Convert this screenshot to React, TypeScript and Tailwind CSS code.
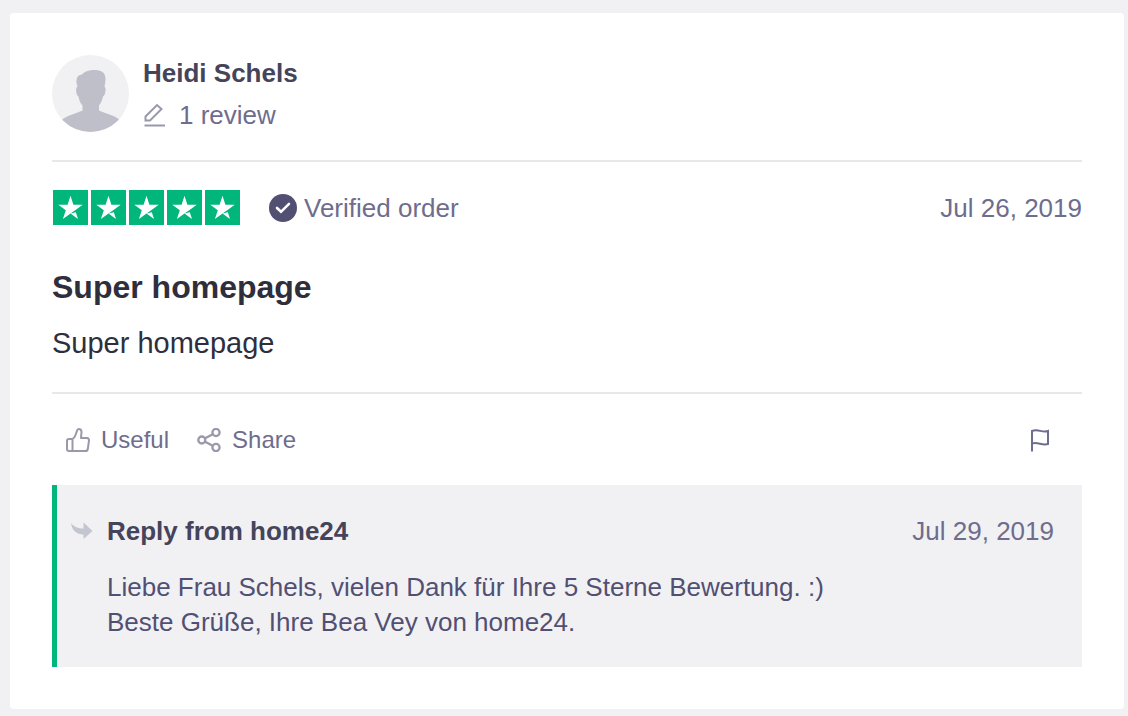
import React from "react";

function Avatar() {
  return (
    <svg viewBox="0 0 77 77" className="size-[77px] shrink-0" aria-hidden="true">
      <clipPath id="avatar-clip">
        <circle cx="38.5" cy="38.5" r="38.5" />
      </clipPath>
      <circle cx="38.5" cy="38.5" r="38.5" fill="#f1f1f4" />
      <path
        clipPath="url(#avatar-clip)"
        fill="#bfbfca"
        d="M25.500 31.500C23.500 26 24 20 30 19.500C33 16 38 15 42 15C49 15 53.500 17 53.500 24C53.500 27 53 29 52.500 31.500C54.500 32.500 53.500 40.500 51 41.500C50.500 44.500 49 48 47 50.500V55.500C53 58.500 62 60 68 65L77 77H0L9.500 65C16 60 24.500 58.500 30.500 55.500V50.500C28 48 27 44.500 26.500 41.500C24 40.500 23.200 32.500 25.500 31.500Z"
      />
    </svg>
  );
}

function Star() {
  return (
    <svg viewBox="0 0 35 35" className="size-[35px]" aria-hidden="true">
      <rect width="35" height="35" fill="#00b67a" />
      <path fill="#fff" d="M29.700 14.700H20.400L17.500 5.800L14.600 14.700H5.300L12.800 20.200L9.900 29.100L17.500 23.600L22.200 20.200Z" />
      <path fill="#fff" d="M17.500 23.600L22.800 22.300L25 29.100Z" />
    </svg>
  );
}

function PencilIcon() {
  return (
    <svg viewBox="0 0 22 24" className="h-6 w-[22px]" fill="none" stroke="#9a99ac" strokeWidth="2" aria-hidden="true">
      <path d="M2.500 13.500L14 2L18.500 6L7 17.500H2.500Z" />
      <path d="M1.500 22.500H22" />
    </svg>
  );
}

function VerifiedIcon() {
  return (
    <svg viewBox="0 0 28 28" className="size-7" fill="none" aria-hidden="true">
      <circle cx="14" cy="14" r="14" fill="#515073" />
      <path d="M8 14L12 17.800L20 9.800" stroke="#fff" strokeWidth="2.600" strokeLinecap="round" />
    </svg>
  );
}

function ThumbIcon() {
  return (
    <svg viewBox="0 0 24 24" className="size-6" fill="none" stroke="#9a99ac" strokeWidth="2" strokeLinejoin="round" aria-hidden="true">
      <path d="M7 11H3Q1 11 1 13V21Q1 23 3 23H19.500Q21.500 23 21.800 21L23 12.500Q23 10 21 10H15L15.500 4Q15.500 1 12.800 1Q11.300 1 11 2.800L9.500 7Q8.800 9.500 6.500 11V23" />
    </svg>
  );
}

function ShareIcon() {
  return (
    <svg viewBox="0 0 24 24" className="size-6" fill="none" stroke="#9a99ac" strokeWidth="2.300" aria-hidden="true">
      <circle cx="4.800" cy="12" r="3.500" />
      <circle cx="19" cy="4.500" r="3.600" />
      <circle cx="19" cy="19.500" r="3.600" />
      <path d="M8 10.300L15.900 6.200M8 13.700L15.900 17.800" />
    </svg>
  );
}

function FlagIcon() {
  return (
    <svg viewBox="0 0 20 24" className="h-6 w-5" fill="none" stroke="#6e6d8d" strokeWidth="2" aria-hidden="true">
      <path d="M2 23.500V3C8 0.500 12 5 18 3V16C12 18 8 13.500 2 15.500" />
    </svg>
  );
}

function ReplyIcon() {
  return (
    <svg viewBox="0 0 22 18" className="h-[18px] w-[22px]" fill="#c3c5d0" aria-hidden="true">
      <path d="M0 1C3 5 7 6.500 12.500 6.500V0.500L21.500 9L12.500 17V12.500C5.500 12.500 1 8.500 0 1Z" />
    </svg>
  );
}

function App() {
  return (
    <main className="min-h-screen bg-[#f1f1f4] pt-[13px] pr-1 pb-[7px] pl-[10px] font-['Liberation_Sans',Arial,sans-serif] text-[26px] leading-9 text-[#6e6d8d]">
      <article className="rounded bg-white p-[42px]">
        <header className="flex items-start gap-[14px] border-b-2 border-[#e8e8ea] pb-7">
          <Avatar />
          <div className="flex flex-col gap-2">
            <a href="#profile" className="font-bold text-[#45445a]">Heidi Schels</a>
            <div className="flex items-center gap-[14px] leading-8">
              <PencilIcon />
              <span>1 review</span>
            </div>
          </div>
        </header>

        <section className="border-b-2 border-[#e8e8ea] pt-7 pb-[31px]">
          <div className="flex items-start justify-between">
            <div className="flex items-start">
              <div className="flex gap-[3px] px-px" role="img" aria-label="5 out of 5 stars">
                {[...Array(5)].map((_, index) => (
                  <Star key={index} />
                ))}
              </div>
              <div className="ml-7 flex items-center gap-[7px]">
                <VerifiedIcon />
                <span>Verified order</span>
              </div>
            </div>
            <time dateTime="2019-07-26">Jul 26, 2019</time>
          </div>
          <h2 className="mt-[41px] text-[32px] leading-10 font-bold text-[#2f2e3d]">Super homepage</h2>
          <p className="mt-[18px] text-[29px] text-[#2f2e3d]">Super homepage</p>
        </section>

        <div className="flex h-[91px] items-center justify-between pr-8 pl-[14px] text-2xl">
          <div className="flex items-center gap-7">
            <button type="button" className="flex items-center gap-[11px]">
              <ThumbIcon />
              Useful
            </button>
            <button type="button" className="flex items-center gap-[11px]">
              <ShareIcon />
              Share
            </button>
          </div>
          <button type="button" aria-label="Report this review">
            <FlagIcon />
          </button>
        </div>

        <section className="border-l-[5px] border-[#00b67a] bg-[#f1f1f4] pt-7 pr-7 pb-[27px] pl-[14px]">
          <div className="flex items-center justify-between">
            <div className="flex items-center gap-[14px]">
              <ReplyIcon />
              <h3 className="font-bold text-[#45445a]">Reply from home24</h3>
            </div>
            <time dateTime="2019-07-29">Jul 29, 2019</time>
          </div>
          <p className="mt-[21px] pl-9 leading-[35px] text-[#515073]">
            Liebe Frau Schels, vielen Dank für Ihre 5 Sterne Bewertung. :)
            <br />
            Beste Grüße, Ihre Bea Vey von home24.
          </p>
        </section>
      </article>
    </main>
  );
}

export default App;
